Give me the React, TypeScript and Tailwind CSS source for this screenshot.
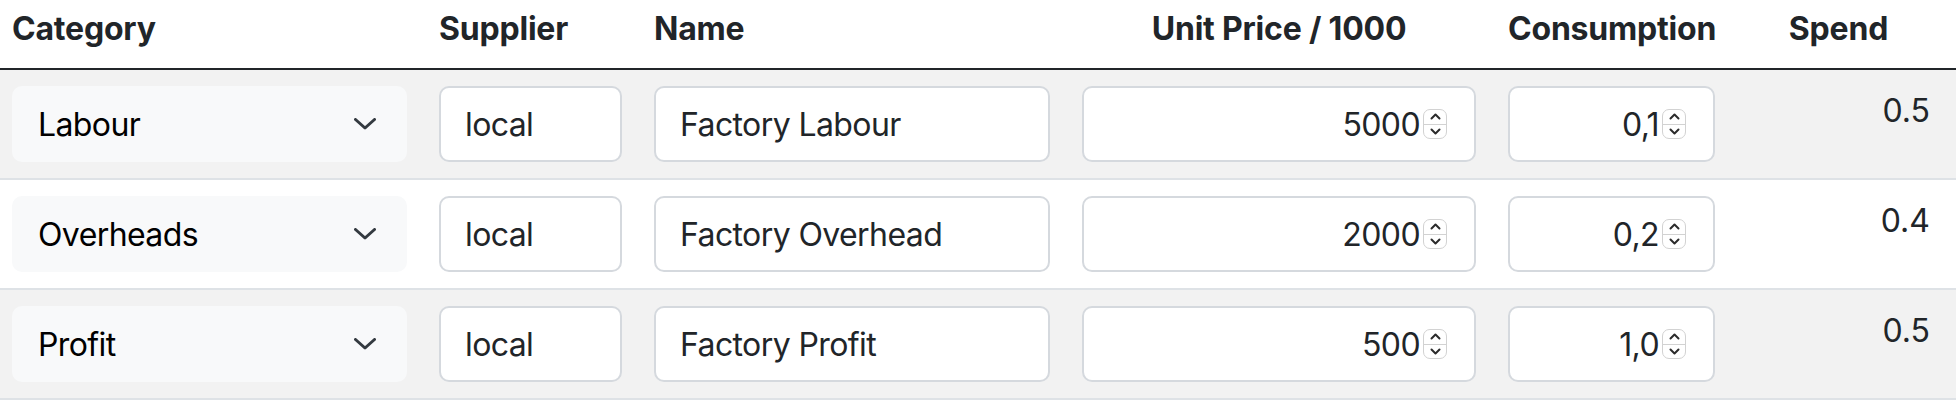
import React from "react";

type Row = {
  category: string;
  supplier: string;
  name: string;
  price: string;
  consumption: string;
  spend: string;
  striped: boolean;
};

const rows: Row[] = [
  { category: "Labour", supplier: "local", name: "Factory Labour", price: "5000", consumption: "0,1", spend: "0.5", striped: true },
  { category: "Overheads", supplier: "local", name: "Factory Overhead", price: "2000", consumption: "0,2", spend: "0.4", striped: false },
  { category: "Profit", supplier: "local", name: "Factory Profit", price: "500", consumption: "1,0", spend: "0.5", striped: true },
];

const cols =
  "grid grid-cols-[395px_183px_396px_394px_207px_183px] gap-x-[32px] pl-[12px] pr-[26px]";

const Chevron = () => (
  <svg width="22" height="12" viewBox="0 0 22 12" fill="none">
    <path d="M1.5 1.5 L11 10 L20.5 1.5" stroke="#343a40" strokeWidth="3" strokeLinecap="round" strokeLinejoin="round" />
  </svg>
);

const Spinner = () => (
  <div className="flex h-[30px] w-[24px] flex-col rounded-[7px] border border-[#d2d2d2] bg-white">
    <div className="flex flex-1 items-center justify-center border-b border-[#d2d2d2]">
      <svg width="11" height="7" viewBox="0 0 11 7" fill="none">
        <path d="M1.5 5.5 L5.5 1.5 L9.5 5.5" stroke="#2b2b2b" strokeWidth="2" strokeLinecap="round" strokeLinejoin="round" />
      </svg>
    </div>
    <div className="flex flex-1 items-center justify-center">
      <svg width="11" height="7" viewBox="0 0 11 7" fill="none">
        <path d="M1.5 1.5 L5.5 5.5 L9.5 1.5" stroke="#2b2b2b" strokeWidth="2" strokeLinecap="round" strokeLinejoin="round" />
      </svg>
    </div>
  </div>
);

const TextBox = ({ value }: { value: string }) => (
  <div className="flex h-[76px] items-center rounded-[10px] border-2 border-[#d5d9de] bg-white px-[24px] pt-[2px] text-[32px] leading-[48px] tracking-[-0.6px] text-[#212529]">
    {value}
  </div>
);

const NumberBox = ({ value }: { value: string }) => (
  <div className="flex h-[76px] items-center justify-end gap-[3px] rounded-[10px] border-2 border-[#d5d9de] bg-white pr-[27px] text-[32px] leading-[48px] tracking-[-0.6px] text-[#212529]">
    <span className="pt-[2px]">{value}</span>
    <Spinner />
  </div>
);

export default function App() {
  return (
    <div className="w-[1956px] bg-white text-[#212529] [font-family:Inter,'Noto_Sans',sans-serif]">
      {/* header */}
      <div className={`${cols} h-[70px] border-b-2 border-[#212529] pt-[5px] text-[32px] font-bold leading-[48px] tracking-[-0.2px]`}>
        <div>Category</div>
        <div>Supplier</div>
        <div>Name</div>
        <div className="text-center">Unit Price / 1000</div>
        <div className="text-center">Consumption</div>
        <div className="text-center">Spend</div>
      </div>

      {/* rows */}
      {rows.map((r, i) => (
        <div
          key={i}
          className={`${cols} border-b-2 border-[#dee2e6] py-[16px] ${r.striped ? "bg-[#f2f2f2]" : "bg-white"}`}
        >
          <div className="flex h-[76px] items-center justify-between rounded-[10px] bg-[#f8f9fa] pl-[26px] pr-[31px] text-[32px] leading-[48px] tracking-[-0.6px] text-black">
            <span className="pt-[2px]">{r.category}</span>
            <Chevron />
          </div>
          <TextBox value={r.supplier} />
          <TextBox value={r.name} />
          <NumberBox value={r.price} />
          <NumberBox value={r.consumption} />
          <div className="pt-[1px] text-right text-[32px] leading-[48px] text-[#212529]">{r.spend}</div>
        </div>
      ))}
    </div>
  );
}
